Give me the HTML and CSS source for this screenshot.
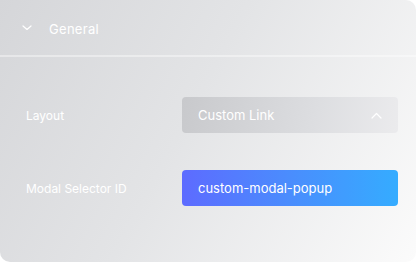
FILE: index.html
```html
<!DOCTYPE html>
<html lang="en">
<head>
  <meta charset="UTF-8" />
  <title>General Settings</title>
  <link rel="stylesheet" href="styles.css">
</head>
<body>

<div class="panel">
  <div class="panel-head">
    <svg class="chev" width="10" height="6" viewBox="0 0 10 6"><path d="M1 1l4 3.5L9 1" fill="none" stroke="#fff" stroke-width="1.2" stroke-linecap="round" stroke-linejoin="round"/></svg>
    <span>General</span>
  </div>

  <div class="panel-body">
    <div class="row">
      <label>Layout</label>
      <div class="field select">
        <span>Custom Link</span>
        <svg width="11" height="7" viewBox="0 0 11 7"><path d="M1 6l4.5-4.5L10 6" fill="none" stroke="#fff" stroke-width="1.2" stroke-linecap="round" stroke-linejoin="round"/></svg>
      </div>
    </div>
    <div class="row">
      <label>Modal Selector ID</label>
      <div class="field input">custom-modal-popup</div>
    </div>
  </div>
</div>

</body>
</html>
```

FILE: styles.css
```css
body {
  margin: 0;
  background: #fff;
  font-family: "Inter", "Noto Sans", sans-serif;
  color: #fff;
}
.panel {
  width: 416px;
  height: 262px;
  box-sizing: border-box;
  border-radius: 0 10px 10px 10px;
  background: linear-gradient(118deg, #d5d6d9 0%, #e3e4e6 45%, #fbfbfb 100%);
}
.panel-head {
  height: 55px;
  display: flex;
  align-items: center;
  padding-left: 22px;
  gap: 17px;
  font-size: 13px;
  letter-spacing: 0.3px;
  border-bottom: 2px solid rgba(255, 255, 255, 0.4);
}
.panel-head span {
  padding-top: 3px;
}
.panel-body {
  padding: 40px 18px 0 26px;
  display: flex;
  flex-direction: column;
  gap: 37px;
}
.row {
  display: flex;
  align-items: center;
  justify-content: space-between;
  font-size: 12px;
}
.field {
  width: 216px;
  height: 36px;
  box-sizing: border-box;
  border-radius: 4px;
  padding: 0 16px;
  display: flex;
  align-items: center;
  font-size: 13px;
}
.select {
  justify-content: space-between;
  background: linear-gradient(100deg, #c8c9cc 0%, #dcdde0 60%, #ebebed 100%);
}
.input {
  background: linear-gradient(90deg, #5d6bff 0%, #4a8dfd 50%, #35acff 100%);
}
```
